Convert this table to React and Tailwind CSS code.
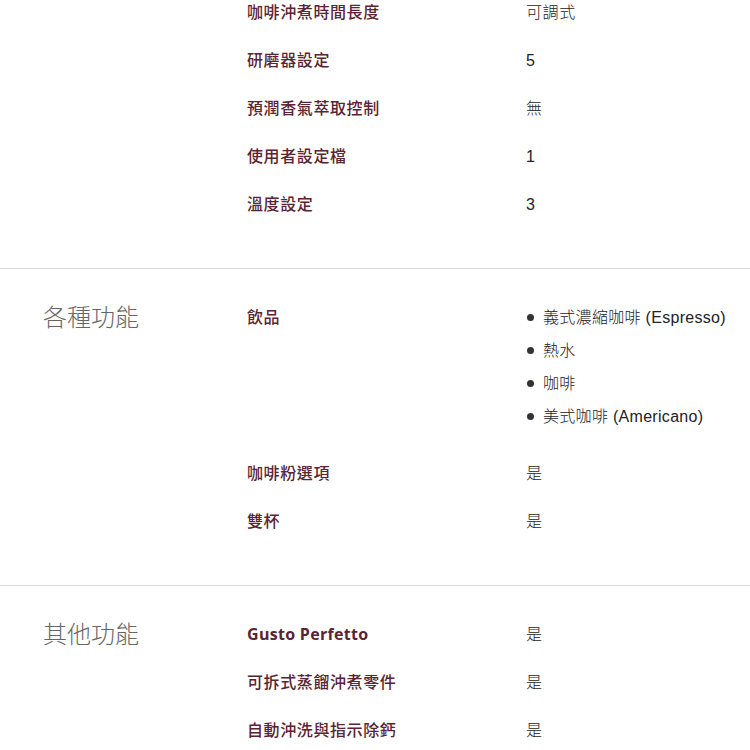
const sections = [
  {
    title: null,
    rows: [
      ["咖啡沖煮時間長度", "可調式"],
      ["研磨器設定", "5"],
      ["預潤香氣萃取控制", "無"],
      ["使用者設定檔", "1"],
      ["溫度設定", "3"],
    ],
  },
  {
    title: "各種功能",
    rows: [
      ["飲品", ["義式濃縮咖啡 (Espresso)", "熱水", "咖啡", "美式咖啡 (Americano)"]],
      ["咖啡粉選項", "是"],
      ["雙杯", "是"],
    ],
  },
  {
    title: "其他功能",
    rows: [
      ["Gusto Perfetto", "是", true],
      ["可拆式蒸餾沖煮零件", "是"],
      ["自動沖洗與指示除鈣", "是"],
    ],
  },
];

function Row({ label, value, bold }) {
  return (
    <div className="flex py-3">
      <div
        className={
          "w-[279px] shrink-0 text-[16px] leading-[24px] text-[#5a2432] " +
          (bold ? "font-bold tracking-[0.3px]" : "font-medium tracking-[0.6px]")
        }
        style={{ fontFamily: '"Open Sans", "Noto Sans CJK TC", sans-serif' }}
      >
        {label}
      </div>
      <div
        className="flex-1 pt-px text-[16px] leading-[23px] font-light text-[#222222] tracking-[0.6px]"
        style={{ fontFamily: '"Liberation Sans", "Noto Sans CJK TC", sans-serif' }}
      >
        {Array.isArray(value) ? (
          <ul className="flex flex-col">
            {value.map((v) => (
              <li key={v} className="flex items-center mb-[10px] last:mb-[9px] tracking-[0.3px]">
                <span className="w-[7px] h-[7px] rounded-full bg-[#333333] ml-[1px] mr-[9px] shrink-0" />
                <span>{v}</span>
              </li>
            ))}
          </ul>
        ) : (
          value
        )}
      </div>
    </div>
  );
}

export default function App() {
  return (
    <div className="w-[750px] h-[750px] overflow-hidden bg-white">
      <div className="-mt-3">
        {sections.map((s, i) => (
          <div key={i}>
            {i > 0 && <div className="h-px bg-[#d9d9d9]" />}
            <div className={"flex pl-[43px] pb-10 " + (i > 0 ? "pt-6" : "")}>
              <div
                className="w-[204px] shrink-0 pt-[7px] text-[24px] leading-[32px] font-light text-[#666666]"
                style={{ fontFamily: '"Noto Sans CJK TC", sans-serif' }}
              >
                {s.title}
              </div>
              <div className="flex-1 flex flex-col">
                {s.rows.map(([l, v, b]) => (
                  <Row key={l} label={l} value={v} bold={b} />
                ))}
              </div>
            </div>
          </div>
        ))}
      </div>
    </div>
  );
}
